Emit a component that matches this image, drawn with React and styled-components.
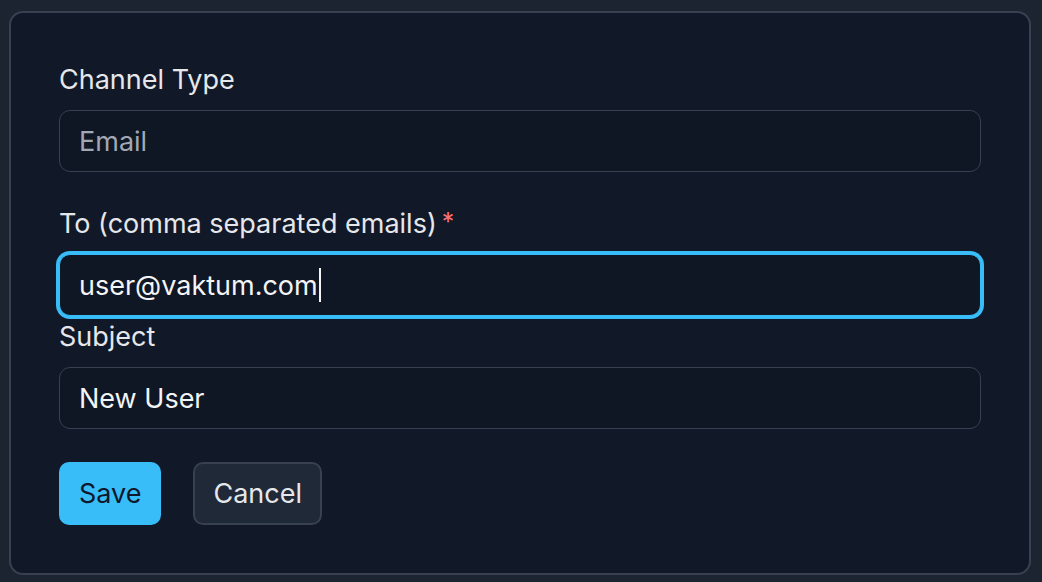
import React from "react";
import styled, { createGlobalStyle } from "styled-components";

const GlobalStyle = createGlobalStyle`
  html, body {
    margin: 0;
    padding: 0;
    background: #1c2331;
    font-family: Inter, "Noto Sans", sans-serif;
  }
  * { box-sizing: border-box; }
`;

const Page = styled.div`
  padding: 11px 11px 8px 9px;
  min-height: 582px;
`;

const Dialog = styled.form`
  background: #111827;
  border: 2px solid #374151;
  border-radius: 14px;
  padding: 47px 48px 48px 48px;
  display: flex;
  flex-direction: column;
`;

const Field = styled.div`
  display: flex;
  flex-direction: column;
  margin-bottom: ${(p) => p.$gap}px;
`;

const Label = styled.label`
  height: 40px;
  line-height: 40px;
  font-size: 27px;
  color: #e5e7eb;
  margin-bottom: 10px;
  display: flex;
  align-items: center;
`;

const Required = styled.span`
  color: #f87171;
  margin-left: 5px;
  font-size: 25px;
  align-self: flex-start;
  line-height: 36px;
`;

const Input = styled.div`
  height: 62px;
  border-radius: 11px;
  border: 1.5px solid ${(p) => (p.$focused ? "#38bdf8" : "#374151")};
  box-shadow: ${(p) => (p.$focused ? "0 0 0 3px #38bdf8" : "none")};
  background: #0f1624;
  padding: 0 19px;
  display: flex;
  align-items: center;
  font-size: 27px;
  color: ${(p) => (p.$disabled ? "#a1a8b4" : "#f3f4f6")};
`;

const Caret = styled.span`
  display: inline-block;
  width: 2px;
  height: 34px;
  background: #f3f4f6;
  margin-left: 1px;
`;

const Actions = styled.div`
  display: flex;
  gap: 32px;
`;

const Button = styled.button`
  height: 63px;
  padding: 0 18px;
  border-radius: 10px;
  font-family: inherit;
  font-size: 27px;
  cursor: pointer;
  background: ${(p) => (p.$primary ? "#38bdf8" : "#1f2937")};
  color: ${(p) => (p.$primary ? "#0f172a" : "#e5e7eb")};
  border: 2px solid ${(p) => (p.$primary ? "#38bdf8" : "#374151")};
`;

export default function App() {
  return (
    <>
      <GlobalStyle />
      <Page>
        <Dialog onSubmit={(e) => e.preventDefault()}>
          <Field $gap={32}>
            <Label>Channel Type</Label>
            <Input $disabled>Email</Input>
          </Field>
          <Field $gap={1}>
            <Label>
              To (comma separated emails)<Required>*</Required>
            </Label>
            <Input $focused>
              user@vaktum.com
              <Caret />
            </Input>
          </Field>
          <Field $gap={33}>
            <Label>Subject</Label>
            <Input>New User</Input>
          </Field>
          <Actions>
            <Button $primary type="submit">
              Save
            </Button>
            <Button type="button">Cancel</Button>
          </Actions>
        </Dialog>
      </Page>
    </>
  );
}
